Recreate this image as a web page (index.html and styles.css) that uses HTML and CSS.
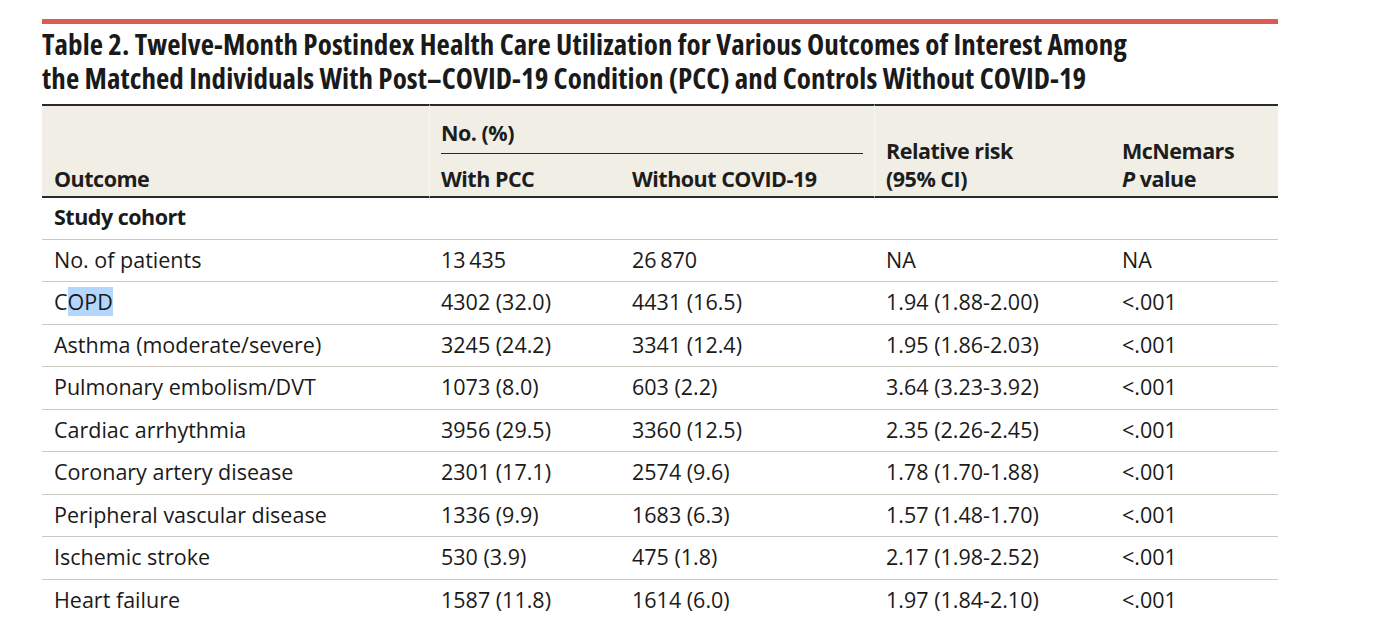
FILE: index.html
```html
<!DOCTYPE html>
<html lang="en">
<head>
<meta charset="utf-8">
<title>Table 2</title>
<link rel="stylesheet" href="styles.css">
</head>
<body>
<div class="page">
  <div class="accent"></div>
  <h1 class="title"><span class="title-line">Table 2. Twelve-Month Postindex Health Care Utilization for Various Outcomes of Interest Among</span><span class="title-line">the Matched Individuals With Post–COVID-19 Condition (PCC) and Controls Without COVID-19</span></h1>
  <table class="data">
    <colgroup>
      <col class="c-outcome">
      <col class="c-pcc">
      <col class="c-ctrl">
      <col class="c-rr">
      <col class="c-p">
    </colgroup>
    <thead>
      <tr>
        <th rowspan="2" class="h-span">Outcome</th>
        <th colspan="2" class="h-group"><div class="group-label">No. (%)</div></th>
        <th rowspan="2" class="h-span h-divide">Relative risk<br>(95% CI)</th>
        <th rowspan="2" class="h-span">McNemars<br><i>P</i> value</th>
      </tr>
      <tr>
        <th class="h-sub h-divide">With PCC</th>
        <th class="h-sub">Without COVID-19</th>
      </tr>
    </thead>
    <tbody>
      <tr class="section"><td>Study cohort</td><td></td><td></td><td></td><td></td></tr>
      <tr><td>No. of patients</td><td>13&#8201;435</td><td>26&#8201;870</td><td>NA</td><td>NA</td></tr>
      <tr><td>C<span class="sel">OPD</span></td><td>4302 (32.0)</td><td>4431 (16.5)</td><td>1.94 (1.88-2.00)</td><td>&lt;.001</td></tr>
      <tr><td>Asthma (moderate/severe)</td><td>3245 (24.2)</td><td>3341 (12.4)</td><td>1.95 (1.86-2.03)</td><td>&lt;.001</td></tr>
      <tr><td>Pulmonary embolism/DVT</td><td>1073 (8.0)</td><td>603 (2.2)</td><td>3.64 (3.23-3.92)</td><td>&lt;.001</td></tr>
      <tr><td>Cardiac arrhythmia</td><td>3956 (29.5)</td><td>3360 (12.5)</td><td>2.35 (2.26-2.45)</td><td>&lt;.001</td></tr>
      <tr><td>Coronary artery disease</td><td>2301 (17.1)</td><td>2574 (9.6)</td><td>1.78 (1.70-1.88)</td><td>&lt;.001</td></tr>
      <tr><td>Peripheral vascular disease</td><td>1336 (9.9)</td><td>1683 (6.3)</td><td>1.57 (1.48-1.70)</td><td>&lt;.001</td></tr>
      <tr><td>Ischemic stroke</td><td>530 (3.9)</td><td>475 (1.8)</td><td>2.17 (1.98-2.52)</td><td>&lt;.001</td></tr>
      <tr><td>Heart failure</td><td>1587 (11.8)</td><td>1614 (6.0)</td><td>1.97 (1.84-2.10)</td><td>&lt;.001</td></tr>
    </tbody>
  </table>
</div>
</body>
</html>
```
FILE: styles.css
```css
html, body {
  margin: 0;
  padding: 0;
  background: #ffffff;
}
body {
  font-family: "Open Sans", "Noto Sans", sans-serif;
  color: #1d1d1d;
}
.page {
  width: 1236px;
  margin-left: 42px;
  padding-top: 19px;
}
.accent {
  height: 5px;
  background: #e05a55;
}
.title {
  margin: 3px 0 9px 0;
  font-size: 29px;
  font-weight: 700;
  font-stretch: 80%;
  letter-spacing: 0.08px;
  line-height: 34px;
  color: #1a1a1a;
}
.title-line {
  display: block;
  height: 34px;
  white-space: nowrap;
}
.data {
  width: 1236px;
  table-layout: fixed;
  border-collapse: separate;
  border-spacing: 0;
  font-size: 21.5px;
  line-height: 28px;
}
.c-outcome { width: 387px; }
.c-pcc { width: 191px; }
.c-ctrl { width: 254px; }
.c-rr { width: 236px; }
.c-p { width: 168px; }

thead th {
  background: #f1eee5;
  font-weight: 700;
  font-size: 21.5px;
  letter-spacing: -0.5px;
  text-align: left;
  color: #1d1d1d;
}
.h-span {
  border-top: 2px solid #2a2a2a;
  border-bottom: 2px solid #2a2a2a;
  vertical-align: bottom;
  padding: 0 8px 3.5px 12px;
}
.h-group {
  border-top: 2px solid #2a2a2a;
  border-left: 1px solid #f8f6f1;
  padding: 0 11px 0 11px;
  vertical-align: bottom;
}
.group-label {
  padding-top: 12.5px;
  padding-bottom: 6.5px;
  border-bottom: 1px solid #2a2a2a;
}
.h-sub {
  border-bottom: 2px solid #2a2a2a;
  padding: 10.5px 8px 3.5px 12px;
  vertical-align: bottom;
}
.h-divide {
  border-left: 1px solid #f8f6f1;
}
.h-sub.h-divide,
.h-span.h-divide {
  padding-left: 11px;
}

tbody td {
  padding: 6px 8px 7.5px 12px;
  border-bottom: 1px solid #cbc8c0;
  white-space: nowrap;
  vertical-align: top;
  color: #1a1a1a;
}
tbody tr.section td {
  font-weight: 700;
  letter-spacing: -0.5px;
  padding-top: 5px;
}
tbody tr:last-child td {
  border-bottom: none;
}
.sel {
  background: #b4d6fd;
}
```
